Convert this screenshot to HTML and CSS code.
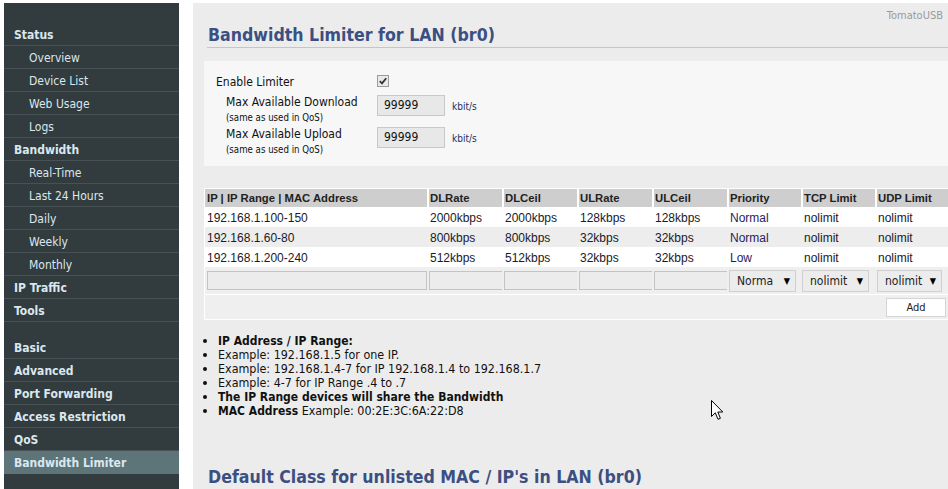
FILE: index.html
```html
<!DOCTYPE html>
<html>
<head>
<meta charset="utf-8">
<link rel="stylesheet" href="styles.css">
</head>
<body>
<div class="page">
  <nav class="sidebar">
    <div class="nav-h">Status</div>
    <div class="nav-i">Overview</div>
    <div class="nav-i">Device List</div>
    <div class="nav-i">Web Usage</div>
    <div class="nav-i">Logs</div>
    <div class="nav-h">Bandwidth</div>
    <div class="nav-i">Real-Time</div>
    <div class="nav-i">Last 24 Hours</div>
    <div class="nav-i">Daily</div>
    <div class="nav-i">Weekly</div>
    <div class="nav-i">Monthly</div>
    <div class="nav-h">IP Traffic</div>
    <div class="nav-h">Tools</div>
    <div class="nav-gap"></div>
    <div class="nav-h">Basic</div>
    <div class="nav-h">Advanced</div>
    <div class="nav-h">Port Forwarding</div>
    <div class="nav-h">Access Restriction</div>
    <div class="nav-h">QoS</div>
    <div class="nav-h active">Bandwidth Limiter</div>
  </nav>
  <main class="content">
    <div class="brand">TomatoUSB</div>
    <h1 class="title">Bandwidth Limiter for LAN (br0)</h1>
    <section class="form-box">
      <div class="frow first">
        <div class="flabel">Enable Limiter</div>
        <div class="fval"><span class="check"><svg width="10" height="10" viewBox="0 0 10 10"><path d="M1.8 5.2 L4 7.4 L8.2 2.2" fill="none" stroke="#333" stroke-width="1.8"/></svg></span></div>
      </div>
      <div class="frow sub">
        <div class="flabel">Max Available Download<small>(same as used in QoS)</small></div>
        <div class="fval"><span class="num">99999</span><span class="unit">kbit/s</span></div>
      </div>
      <div class="frow sub">
        <div class="flabel">Max Available Upload<small>(same as used in QoS)</small></div>
        <div class="fval"><span class="num">99999</span><span class="unit">kbit/s</span></div>
      </div>
    </section>
    <table class="grid">
      <thead>
        <tr>
          <th class="c-ip">IP | IP Range | MAC Address</th>
          <th class="c-n">DLRate</th>
          <th class="c-n">DLCeil</th>
          <th class="c-n">ULRate</th>
          <th class="c-n">ULCeil</th>
          <th class="c-p">Priority</th>
          <th class="c-p">TCP Limit</th>
          <th class="c-p">UDP Limit</th>
        </tr>
      </thead>
      <tbody>
        <tr class="odd"><td>192.168.1.100-150</td><td>2000kbps</td><td>2000kbps</td><td>128kbps</td><td>128kbps</td><td class="pri">Normal</td><td>nolimit</td><td>nolimit</td></tr>
        <tr class="even"><td>192.168.1.60-80</td><td>800kbps</td><td>800kbps</td><td>32kbps</td><td>32kbps</td><td class="pri">Normal</td><td>nolimit</td><td>nolimit</td></tr>
        <tr class="odd"><td>192.168.1.200-240</td><td>512kbps</td><td>512kbps</td><td>32kbps</td><td>32kbps</td><td class="pri">Low</td><td>nolimit</td><td>nolimit</td></tr>
        <tr class="edit">
          <td><span class="tin wide"></span></td>
          <td><span class="tin"></span></td>
          <td><span class="tin"></span></td>
          <td><span class="tin"></span></td>
          <td><span class="tin"></span></td>
          <td><span class="sel"><span>Norma</span><span class="arr">▼</span></span></td>
          <td class="tcp"><span class="sel"><span>nolimit</span><span class="arr">▼</span></span></td>
          <td><span class="sel last"><span>nolimit</span><span class="arr">▼</span></span></td>
        </tr>
        <tr class="addrow"><td colspan="8"><span class="btn">Add</span></td></tr>
      </tbody>
    </table>
    <ul class="notes">
      <li><b>IP Address / IP Range:</b></li>
      <li>Example: 192.168.1.5 for one IP.</li>
      <li>Example: 192.168.1.4-7 for IP 192.168.1.4 to 192.168.1.7</li>
      <li>Example: 4-7 for IP Range .4 to .7</li>
      <li><b>The IP Range devices will share the Bandwidth</b></li>
      <li><b>MAC Address</b> Example: 00:2E:3C:6A:22:D8</li>
    </ul>
    <h1 class="title title2">Default Class for unlisted MAC / IP's in LAN (br0)</h1>
    <svg class="cursor" width="14" height="21" viewBox="0 0 14 21"><path d="M0.5 0.5 L0.5 16.5 L4.3 12.8 L7 19.3 L9.4 18.3 L6.8 12 L11.8 12 Z" fill="#fff" stroke="#000" stroke-width="1"/></svg>
  </main>
</div>
</body>
</html>
```

FILE: styles.css
```css
html, body {
  margin: 0;
  padding: 0;
  background: #fff;
}
body {
  font-family: "DejaVu Sans Condensed", "DejaVu Sans", sans-serif;
  font-size: 12px;
  color: #111;
}
.page {
  display: flex;
  padding-top: 3px;
  height: 486px;
  overflow: hidden;
}
.sidebar {
  margin-left: 4px;
  width: 175px;
  background: #323b3e;
  padding-top: 20px;
  box-sizing: border-box;
  flex: none;
}
.nav-h, .nav-i {
  height: 22px;
  line-height: 24px;
  border-bottom: 1px solid #485154;
  color: #dbe7ee;
  white-space: nowrap;
}
.nav-h {
  padding-left: 10px;
  font-weight: bold;
  font-size: 12px;
}
.nav-i {
  padding-left: 25px;
  font-size: 12px;
}
.nav-gap {
  height: 14px;
}
.nav-h.active {
  background: #5d7479;
  border-bottom-color: #5d7479;
}
.content {
  position: relative;
  margin-left: 14px;
  flex: 1;
  background: #ececec;
  overflow: hidden;
}
.brand {
  text-align: right;
  padding: 6px 5px 0 0;
  height: 15px;
  font-size: 11px;
  color: #9a9a9a;
}
.title {
  margin: 0 0 0 14px;
  padding: 1px 0 2px 1px;
  font-size: 17.6px;
  font-weight: bold;
  color: #3b4f82;
  border-bottom: 1px solid #c6c6c6;
  height: 20px;
  line-height: 20px;
  white-space: nowrap;
}
.form-box {
  margin: 13px 0 0 11px;
  background: #f7f7f7;
  height: 105px;
  padding: 13px 0 0 12px;
  box-sizing: border-box;
}
.frow {
  display: flex;
  align-items: flex-start;
}
.frow.first {
  height: 20px;
}
.flabel {
  width: 161px;
  line-height: 15px;
  padding-top: 1px;
}
.frow.sub {
  height: 32px;
}
.frow.sub .flabel {
  padding-left: 10px;
  width: 151px;
}
.flabel small {
  display: block;
  font-size: 9.6px;
  line-height: 15px;
}
.check {
  display: inline-block;
  width: 10px;
  height: 10px;
  border: 1px solid #9a9a9a;
  background: #e9e9e9;
  margin-top: 1px;
}
.check svg { display: block; }
.fval {
  display: flex;
  align-items: center;
}
.num {
  margin-top: 1px;
  width: 60px;
  height: 19px;
  line-height: 19px;
  padding-left: 6px;
  border: 1px solid #c8c8c8;
  background: #e8e8e8;
}
.unit {
  margin-left: 7px;
  margin-top: 3px;
  font-size: 10px;
  color: #1f2f5a;
}
.grid {
  margin: 22px 0 0 11px;
  width: 746px;
  border-collapse: separate;
  border-spacing: 0;
  border: 1px solid #fff;
  font-family: "Liberation Sans", Arial, sans-serif;
  font-size: 12px;
  table-layout: fixed;
}
.grid th {
  box-sizing: border-box;
  background: #cecece;
  text-align: left;
  font-weight: bold;
  font-size: 11.3px;
  height: 18px;
  padding: 0 0 0 1px;
  border-left: 2px solid #fff;
  color: #222;
  white-space: nowrap;
  overflow: hidden;
}
.grid th:first-child { border-left: none; padding-left: 2px; }
.c-ip { width: 222px; }
.c-n { width: 75px; }
.c-p { width: 74px; }
.grid td {
  height: 19px;
  padding: 1px 0 0 3px;
  white-space: nowrap;
  color: #1a1a2a;
}
.grid td:first-child { padding-left: 2px; }
.grid tr.odd td { background: #fff; }
.grid tr.even td { background: #ededed; }
.grid td.pri { color: #2e1a5e; }
.grid tr.edit td {
  background: #efefef;
  height: 24px;
  vertical-align: top;
  padding: 3px 0 0 2px;
  border-bottom: 1px solid #fff;
}
.grid tr.edit td.tcp { padding-left: 1px; }
.tin {
  display: block;
  margin-top: 1px;
  width: 73px;
  height: 17px;
  border: 1px solid #c4c4c4;
  background: #ececec;
}
.tin.wide { width: 218px; }
.sel {
  display: flex;
  justify-content: space-between;
  align-items: center;
  height: 22px;
  width: 67px;
  box-sizing: border-box;
  border: 1px solid #cfcfcf;
  background: #ececec;
  padding: 0 5px 0 7px;
  font-family: "DejaVu Sans Condensed", sans-serif;
  font-size: 12px;
  color: #222;
}
.sel.last { width: 65px; }
.arr { font-size: 9px; color: #000; }
.grid tr.addrow td {
  background: #efefef;
  height: 24px;
  text-align: right;
  padding: 0 3px 0 0;
}
.btn {
  display: inline-block;
  width: 58px;
  height: 17px;
  line-height: 17px;
  border: 1px solid #d4d4d4;
  background: #fff;
  text-align: center;
  font-family: "DejaVu Sans Condensed", sans-serif;
  font-size: 11px;
  color: #222;
  vertical-align: middle;
}
.notes {
  margin: 14px 0 0 0;
  padding-left: 25px;
  line-height: 14px;
  font-size: 12.4px;
  color: #111;
}
.notes b { font-size: 12px; }
.title2 {
  margin-top: 48px;
  border-bottom: none;
}
.cursor {
  position: absolute;
  left: 518px;
  top: 397px;
}
```
